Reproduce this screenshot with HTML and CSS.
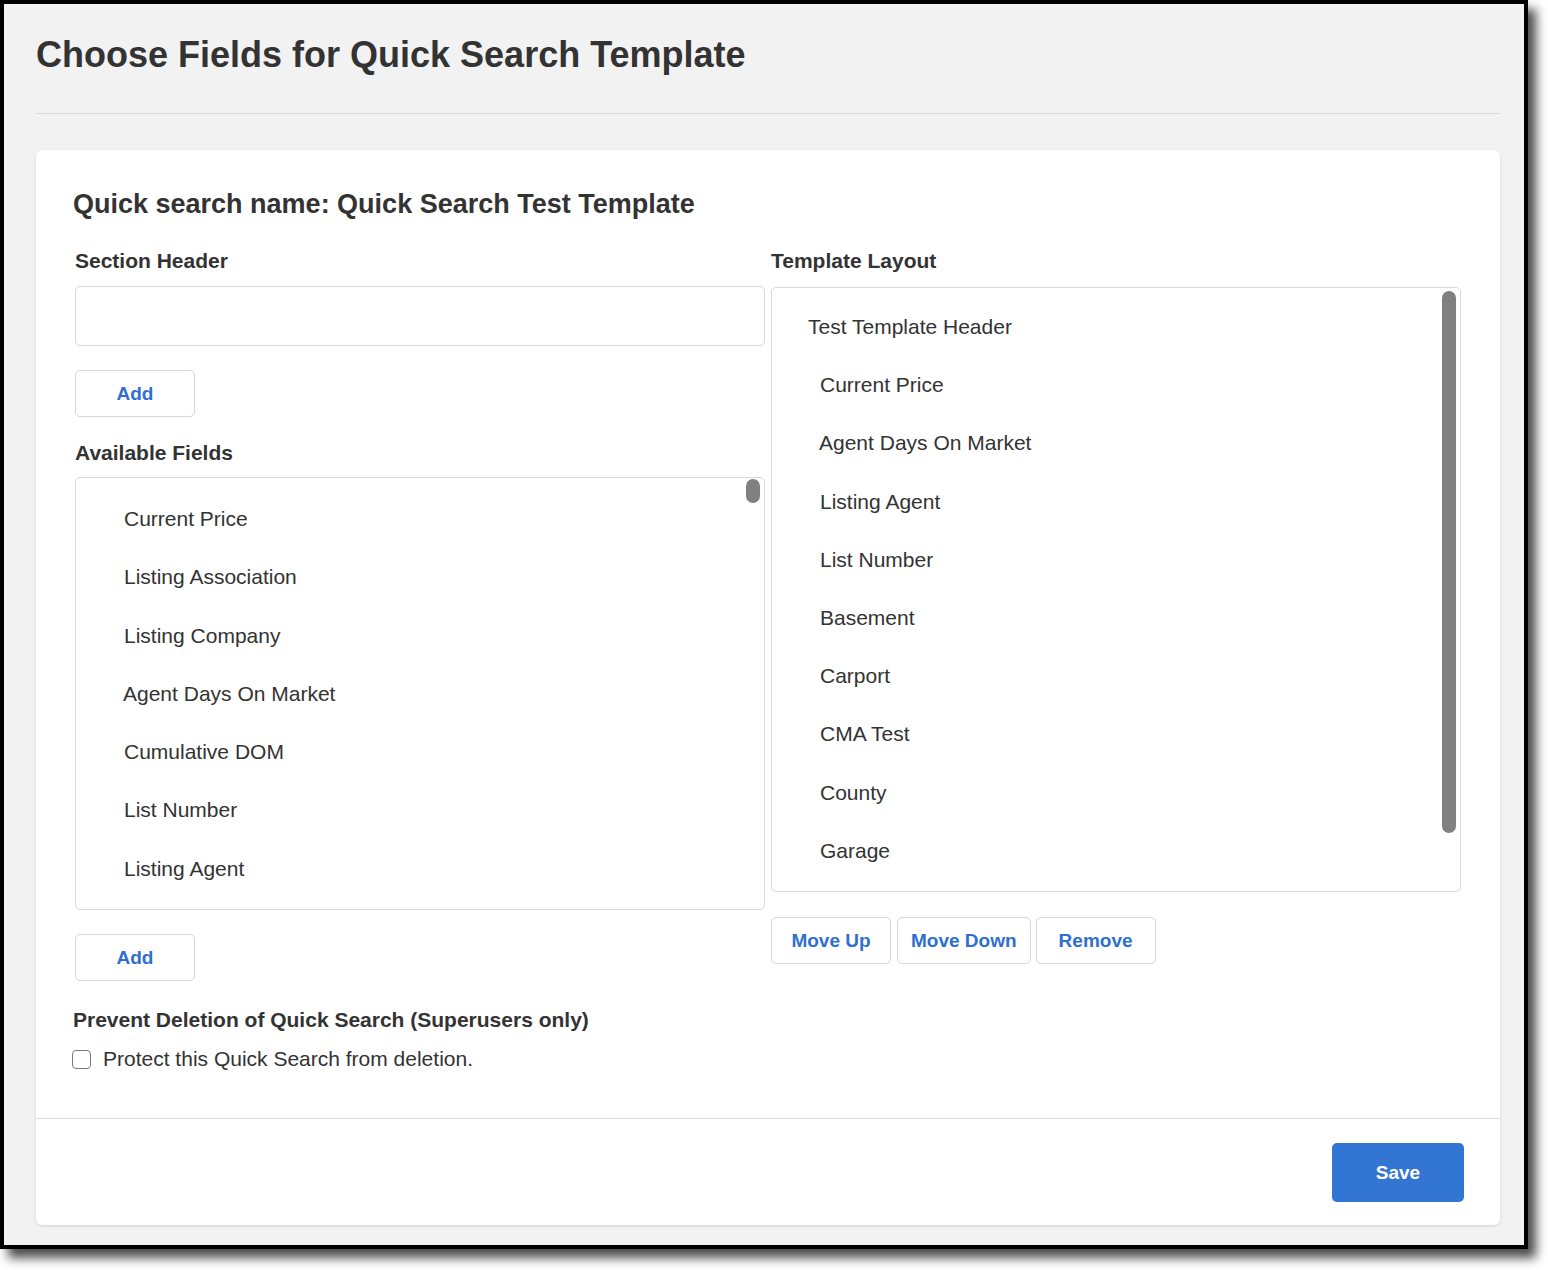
FILE: index.html
```html
<!DOCTYPE html>
<html lang="en">
<head>
    <meta charset="UTF-8">
    <meta name="viewport" content="width=device-width, initial-scale=1.0">
    <title>Choose Fields for Quick Search Template</title>
    <link rel="stylesheet" href="styles.css">
</head>
<body>

<div class="window">
    <h1 class="page-title">Choose Fields for Quick Search Template</h1>
    <hr class="rule">

    <div class="card">
        <div class="card-body">
            <h2 class="qs-name">Quick search name: Quick Search Test Template</h2>

            <div class="columns">
                <div class="col">
                    <label class="field-label" for="sectionHeader">Section Header</label>
                    <input type="text" id="sectionHeader" class="text-input">
                    <button class="btn add-btn">Add</button>

                    <div class="field-label spaced">Available Fields</div>
                    <div class="list list-available">
                        <ul>
                            <li>Current Price</li>
                            <li>Listing Association</li>
                            <li>Listing Company</li>
                            <li class="nudge">Agent Days On Market</li>
                            <li>Cumulative DOM</li>
                            <li>List Number</li>
                            <li>Listing Agent</li>
                        </ul>
                        <span class="thumb thumb-available"></span>
                    </div>
                    <button class="btn add-btn">Add</button>
                </div>

                <div class="col">
                    <div class="field-label layout-label">Template Layout</div>
                    <div class="list list-layout">
                        <ul>
                            <li class="header-item">Test Template Header</li>
                            <li>Current Price</li>
                            <li class="nudge">Agent Days On Market</li>
                            <li>Listing Agent</li>
                            <li>List Number</li>
                            <li>Basement</li>
                            <li>Carport</li>
                            <li>CMA Test</li>
                            <li>County</li>
                            <li>Garage</li>
                        </ul>
                        <span class="thumb thumb-layout"></span>
                    </div>
                    <div class="btn-row">
                        <button class="btn">Move Up</button>
                        <button class="btn">Move Down</button>
                        <button class="btn">Remove</button>
                    </div>
                </div>
            </div>

            <div class="protect">
                <div class="protect-title">Prevent Deletion of Quick Search (Superusers only)</div>
                <label class="check-row">
                    <input type="checkbox" class="check">
                    <span>Protect this Quick Search from deletion.</span>
                </label>
            </div>
        </div>

        <div class="card-footer">
            <button class="btn-primary">Save</button>
        </div>
    </div>
</div>

</body>
</html>
```

FILE: styles.css
```css
body {
    margin: 0;
    min-height: 1270px;
    background-color: #ffffff;
    font-family: "Liberation Sans", Arial, sans-serif;
    color: #333333;
}
.window {
    width: 1528px;
    box-sizing: border-box;
    border: 4px solid #000000;
    background-color: #f2f2f2;
    padding: 30px 24px 20px 32px;
    box-shadow: 8px 9px 10px rgba(0, 0, 0, 0.7);
}
.page-title {
    margin: 0;
    font-size: 36px;
    line-height: 42px;
    font-weight: bold;
    color: #333333;
}
.rule {
    margin: 37px 0 0 0;
    height: 0;
    border: 0;
    border-top: 1px solid #d9d9d9;
}
.card {
    margin-top: 36px;
    background: #ffffff;
    border-radius: 6px;
    box-shadow: 0 1px 3px rgba(0, 0, 0, 0.14);
}
.card-body {
    padding: 38px 37px 47px 37px;
}
.qs-name {
    margin: 0;
    font-size: 27px;
    line-height: 32px;
    font-weight: bold;
}
.columns {
    margin-top: 29px;
    padding: 0 2px;
    display: grid;
    grid-template-columns: 1fr 1fr;
    column-gap: 6px;
    align-items: start;
}
.col {
    display: flex;
    flex-direction: column;
    align-items: flex-start;
}
.field-label {
    display: block;
    font-size: 21px;
    line-height: 24px;
    font-weight: bold;
    margin-bottom: 13px;
}
.field-label.spaced {
    margin-top: 24px;
    margin-bottom: 12px;
}
.field-label.layout-label {
    margin-bottom: 14px;
}
.text-input {
    width: 100%;
    height: 60px;
    box-sizing: border-box;
    margin: 0;
    border: 1px solid #d6d6d6;
    border-radius: 5px;
    background: #ffffff;
    font-family: inherit;
    font-size: 21px;
    padding: 0 14px;
}
.btn {
    height: 47px;
    min-width: 120px;
    box-sizing: border-box;
    padding: 0 13px;
    margin: 0;
    background: #ffffff;
    border: 1px solid #d6d6d6;
    border-radius: 5px;
    color: #2e6fd1;
    font-family: inherit;
    font-size: 19px;
    font-weight: bold;
    cursor: pointer;
}
.add-btn {
    margin-top: 24px;
}
.list {
    position: relative;
    width: 100%;
    box-sizing: border-box;
    border: 1px solid #d9d9d9;
    border-radius: 5px;
    background: #ffffff;
    overflow: hidden;
}
.list ul {
    list-style: none;
    margin: 0;
    padding: 12px 0 0 0;
}
.list li {
    height: 58.3px;
    line-height: 58px;
    font-size: 21px;
    padding-left: 48px;
    white-space: nowrap;
}
.list li.nudge {
    padding-left: 47px;
}
.list li.header-item {
    padding-left: 36px;
}
.list-available {
    height: 433px;
}
.list-layout {
    height: 605px;
}
.list-layout ul {
    padding-top: 10px;
}
.list-layout li {
    height: 58.2px;
}
/* scroll thumbs drawn over the list edge */
.thumb {
    position: absolute;
    width: 14px;
    border-radius: 7px;
    background: #808080;
}
.thumb-available {
    top: 1px;
    right: 4px;
    height: 24px;
}
.thumb-layout {
    top: 3px;
    right: 4px;
    height: 542px;
}
.btn-row {
    margin-top: 25px;
    display: flex;
    gap: 6px;
}
.btn-row .btn:last-child {
    margin-left: -1px;
}
.protect {
    margin-top: 27px;
}
.protect-title {
    font-size: 21px;
    line-height: 24px;
    font-weight: bold;
}
.check-row {
    margin-top: 15px;
    display: flex;
    align-items: center;
    gap: 12px;
    font-size: 21px;
    line-height: 24px;
}
.check {
    appearance: none;
    -webkit-appearance: none;
    width: 19px;
    height: 19px;
    margin: 0 0 0 -1px;
    border: 1px solid #7a7a7a;
    border-radius: 4px;
    background: #ffffff;
}
.card-footer {
    border-top: 1px solid #dcdcdc;
    padding: 24px 36px 23px 0;
    display: flex;
    justify-content: flex-end;
}
.btn-primary {
    width: 132px;
    height: 59px;
    border: none;
    border-radius: 5px;
    background-color: #3375d3;
    color: #ffffff;
    font-family: inherit;
    font-size: 19px;
    font-weight: bold;
    cursor: pointer;
}
```
